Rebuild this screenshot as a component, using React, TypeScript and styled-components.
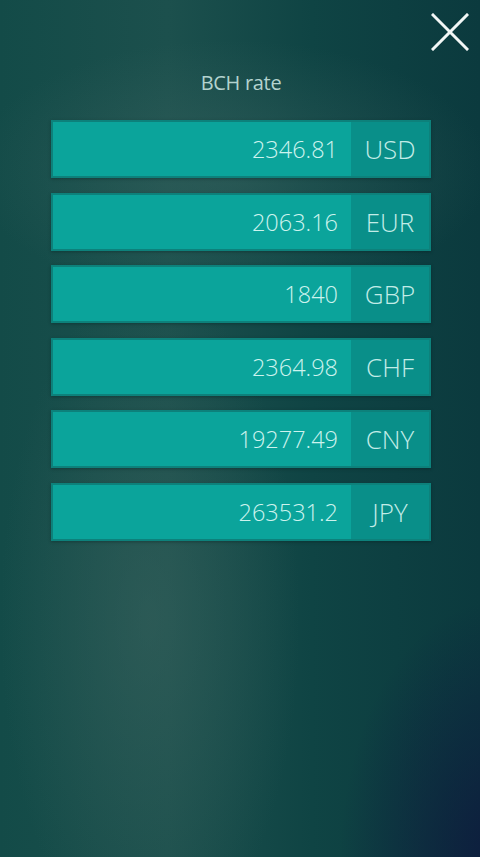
import React from "react";
import styled, { createGlobalStyle } from "styled-components";

const Global = createGlobalStyle`
  html, body { margin: 0; padding: 0; }
  body { font-family: "Open Sans", "Liberation Sans", sans-serif; }
`;

const Page = styled.div`
  position: relative;
  width: 480px;
  min-height: 857px;
  box-sizing: border-box;
  padding-top: 70px;
  overflow: hidden;
  background:
    radial-gradient(ellipse 150px 340px at 150px 620px, rgba(60, 100, 95, 0.5), rgba(60, 100, 95, 0) 100%),
    radial-gradient(ellipse 260px 130px at 230px 170px, rgba(70, 110, 105, 0.4), rgba(70, 110, 105, 0) 100%),
    radial-gradient(ellipse 160px 260px at 500px 860px, rgba(14, 26, 62, 0.95), rgba(14, 26, 62, 0) 100%),
    linear-gradient(90deg, #134b48 0%, #1c504d 35%, #0f4444 65%, #0b3a3e 100%);
`;

const CloseButton = styled.button`
  position: absolute;
  top: 12px;
  right: 10px;
  width: 40px;
  height: 40px;
  padding: 0;
  border: none;
  background: transparent;
  display: flex;
  align-items: center;
  justify-content: center;
  cursor: pointer;
`;

const Title = styled.div`
  text-align: center;
  font-size: 20px;
  font-weight: 400;
  color: #b4d3cf;
  line-height: 26px;
  letter-spacing: -0.3px;
  padding-left: 2px;
`;

const List = styled.div`
  width: 380px;
  margin: 24px 0 0 51px;
  display: flex;
  flex-direction: column;
  gap: 14.6px;
`;

const Row = styled.div`
  display: flex;
  height: 58px;
  box-sizing: border-box;
  border: 2px solid #0d817b;
  box-shadow: 0 1px 3px rgba(0, 20, 20, 0.35);
`;

const Value = styled.div`
  flex: 1;
  display: flex;
  align-items: center;
  justify-content: flex-end;
  padding-right: 13px;
  background: #0ba49b;
  color: #cdf3ee;
  font-size: 23.5px;
  font-weight: 300;
`;

const Code = styled.div`
  width: 78px;
  display: flex;
  align-items: center;
  justify-content: center;
  background: #098f89;
  color: #c2ece7;
  font-size: 26px;
  font-weight: 300;
`;

const rates = [
  { value: "2346.81", code: "USD" },
  { value: "2063.16", code: "EUR" },
  { value: "1840", code: "GBP" },
  { value: "2364.98", code: "CHF" },
  { value: "19277.49", code: "CNY" },
  { value: "263531.2", code: "JPY" },
];

export default function App() {
  return (
    <Page>
      <Global />
      <CloseButton aria-label="Close">
        <svg width="38" height="38" viewBox="0 0 38 38">
          <path d="M2 2 L36 36 M36 2 L2 36" stroke="#f2f7f6" strokeWidth="3" strokeLinecap="square" />
        </svg>
      </CloseButton>
      <Title>BCH rate</Title>
      <List>
        {rates.map((r) => (
          <Row key={r.code}>
            <Value>{r.value}</Value>
            <Code>{r.code}</Code>
          </Row>
        ))}
      </List>
    </Page>
  );
}
